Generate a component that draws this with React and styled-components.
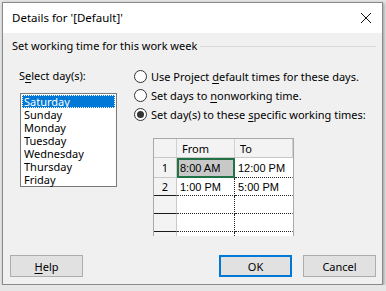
import React, { useState } from "react";
import styled, { createGlobalStyle, css } from "styled-components";

const GlobalStyle = createGlobalStyle`
  html, body {
    margin: 0;
    padding: 0;
    background: #e6e6e6;
    font-family: "Noto Sans", "Open Sans", sans-serif;
    font-size: 11px;
    color: #000;
  }
`;

const Window = styled.div`
  margin: 2px 0 0 2px;
  width: 381px;
  height: 283px;
  box-sizing: border-box;
  border: 1px solid #8a8a8a;
  background: #f0f0f0;
  display: flex;
  flex-direction: column;
  box-shadow: 1px 1px 3px rgba(0, 0, 0, 0.35);
`;

const TitleBar = styled.div`
  height: 30px;
  background: #fff;
  display: flex;
  align-items: center;
  justify-content: space-between;
  padding: 0 9px 0 9px;
  flex-shrink: 0;
`;

const Title = styled.span`
  font-size: 11.5px;
  line-height: 16px;
`;

const Close = styled.span`
  display: flex;
  width: 14px;
  height: 14px;
  align-items: center;
  justify-content: center;
`;

const Body = styled.div`
  flex: 1;
  display: flex;
  flex-direction: column;
  padding: 5px 6px 7px 9px;
`;

const GroupHead = styled.div`
  display: flex;
  align-items: center;
  gap: 3px;
  line-height: 16px;

  &::after {
    content: "";
    flex: 1;
    height: 1px;
    background: #d8d8d8;
    margin-top: 1px;
  }
`;

const Content = styled.div`
  display: flex;
  margin-top: 14px;
  padding-left: 7px;
`;

const LeftCol = styled.div`
  width: 98px;
  display: flex;
  flex-direction: column;
`;

const Label = styled.div`
  line-height: 16px;
`;

const U = styled.span`
  text-decoration: underline;
  text-underline-offset: 2px;
`;

const ListBox = styled.div`
  margin-top: 9px;
  margin-left: 1px;
  width: 97px;
  height: 94px;
  box-sizing: border-box;
  border: 1px solid #7a7a7a;
  background: #fff;
  padding: 1px;
`;

const ListItem = styled.div`
  height: 13px;
  line-height: 13px;
  padding-left: 2px;
  box-sizing: border-box;
  white-space: nowrap;
  ${(p) =>
    p.$selected &&
    css`
      background: #0078d7;
      color: #fff;
      outline: 1px dotted #fff;
      outline-offset: -1px;
    `}
`;

const RightCol = styled.div`
  margin-left: 17px;
  display: flex;
  flex-direction: column;
`;

const RadioRow = styled.label`
  display: flex;
  align-items: center;
  height: 19px;
  gap: 4px;
  margin-top: ${(p) => (p.$first ? "-1px" : "0")};
  white-space: nowrap;
`;

const RadioCircle = styled.span`
  width: 11px;
  height: 11px;
  border: 1px solid #333;
  border-radius: 50%;
  background: #fff;
  display: flex;
  align-items: center;
  justify-content: center;
  flex-shrink: 0;

  &::after {
    content: "";
    width: 7px;
    height: 7px;
    border-radius: 50%;
    background: ${(p) => (p.$checked ? "#333" : "transparent")};
  }
`;

const GridClip = styled.div`
  margin-top: 14px;
  margin-left: 19px;
  height: 98px;
  overflow: hidden;
`;

const Grid = styled.div`
  display: grid;
  grid-template-columns: 23px 58px 58px;
  grid-auto-rows: 18px;
  grid-template-rows: 19px 20px;
  width: 139px;
  border-top: 1px solid #a9a9a9;
  border-left: 1px solid #a9a9a9;
  border-right: 1px solid #a9a9a9;
  font-family: "Liberation Sans", Arial, sans-serif;
  font-size: 11px;
`;

const HeadCell = styled.div`
  background: #f3f3f3;
  border-right: 1px solid #d0d0d0;
  border-bottom: 1px solid #c8c8c8;
  font-family: "Noto Sans", sans-serif;
  font-size: 11px;
  display: flex;
  align-items: center;
  padding-left: 5px;
  box-sizing: border-box;
  &:last-child {
    border-right: none;
  }
`;

const RowHead = styled.div`
  background: #f3f3f3;
  border-right: 1px solid #c8c8c8;
  border-bottom: 1px solid ${(p) => (p.$dark ? "#1a1a1a" : "#c8c8c8")};
  display: flex;
  align-items: center;
  justify-content: center;
  font-size: 11px;
  font-family: "Noto Sans", sans-serif;
  box-sizing: border-box;
`;

const Cell = styled.div`
  background: ${(p) => (p.$active ? "#c8c8c8" : "#fff")};
  border-right: 1px dotted ${(p) => (p.$last ? "transparent" : "#222")};
  border-bottom: 1px dotted #222;
  display: flex;
  align-items: center;
  padding-left: 3px;
  box-sizing: border-box;
  white-space: nowrap;
  ${(p) =>
    p.$active &&
    css`
      border: 2px solid #217346;
      padding-left: 1px;
    `}
`;

const ButtonRow = styled.div`
  margin-top: auto;
  margin-left: -2px;
  display: flex;
  align-items: center;
`;

const Button = styled.button`
  width: 73px;
  height: 22px;
  box-sizing: border-box;
  background: #e1e1e1;
  border: 1px solid #adadad;
  font-family: "Noto Sans", sans-serif;
  font-size: 11px;
  color: #000;
  padding: 0;
  margin-left: ${(p) => p.$gap || "0"};
  ${(p) =>
    p.$default &&
    css`
      border: 2px solid #0078d7;
    `}
`;

const days = ["Saturday", "Sunday", "Monday", "Tuesday", "Wednesday", "Thursday", "Friday"];

const rows = [
  ["8:00 AM", "12:00 PM"],
  ["1:00 PM", "5:00 PM"],
  ["", ""],
  ["", ""],
  ["", ""],
];

export default function App() {
  const [day, setDay] = useState(0);
  const [mode, setMode] = useState(2);

  return (
    <>
      <GlobalStyle />
      <Window>
        <TitleBar>
          <Title>Details for '[Default]'</Title>
          <Close>
            <svg width="12" height="12" viewBox="0 0 12 12">
              <path d="M1 1L11 11M11 1L1 11" stroke="#111" strokeWidth="1" />
            </svg>
          </Close>
        </TitleBar>
        <Body>
          <GroupHead>Set working time for this work week</GroupHead>
          <Content>
            <LeftCol>
              <Label>
                S<U>e</U>lect day(s):
              </Label>
              <ListBox>
                {days.map((d, i) => (
                  <ListItem key={d} $selected={i === day} onClick={() => setDay(i)}>
                    {d}
                  </ListItem>
                ))}
              </ListBox>
            </LeftCol>
            <RightCol>
              <RadioRow $first onClick={() => setMode(0)}>
                <RadioCircle $checked={mode === 0} />
                <span>
                  Use Project <U>d</U>efault times for these days.
                </span>
              </RadioRow>
              <RadioRow onClick={() => setMode(1)}>
                <RadioCircle $checked={mode === 1} />
                <span>
                  Set days to <U>n</U>onworking time.
                </span>
              </RadioRow>
              <RadioRow onClick={() => setMode(2)}>
                <RadioCircle $checked={mode === 2} />
                <span>
                  Set day(s) to these <U>s</U>pecific working times:
                </span>
              </RadioRow>
              <GridClip>
                <Grid>
                  <HeadCell />
                  <HeadCell>From</HeadCell>
                  <HeadCell>To</HeadCell>
                  {rows.map((r, i) => (
                    <React.Fragment key={i}>
                      <RowHead $dark={i >= 1}>{i < 2 ? i + 1 : ""}</RowHead>
                      <Cell $active={i === 0}>{r[0]}</Cell>
                      <Cell $last>{r[1]}</Cell>
                    </React.Fragment>
                  ))}
                </Grid>
              </GridClip>
            </RightCol>
          </Content>
          <ButtonRow>
            <Button>
              <U>H</U>elp
            </Button>
            <Button $default $gap="136px">OK</Button>
            <Button $gap="11px">Cancel</Button>
          </ButtonRow>
        </Body>
      </Window>
    </>
  );
}
